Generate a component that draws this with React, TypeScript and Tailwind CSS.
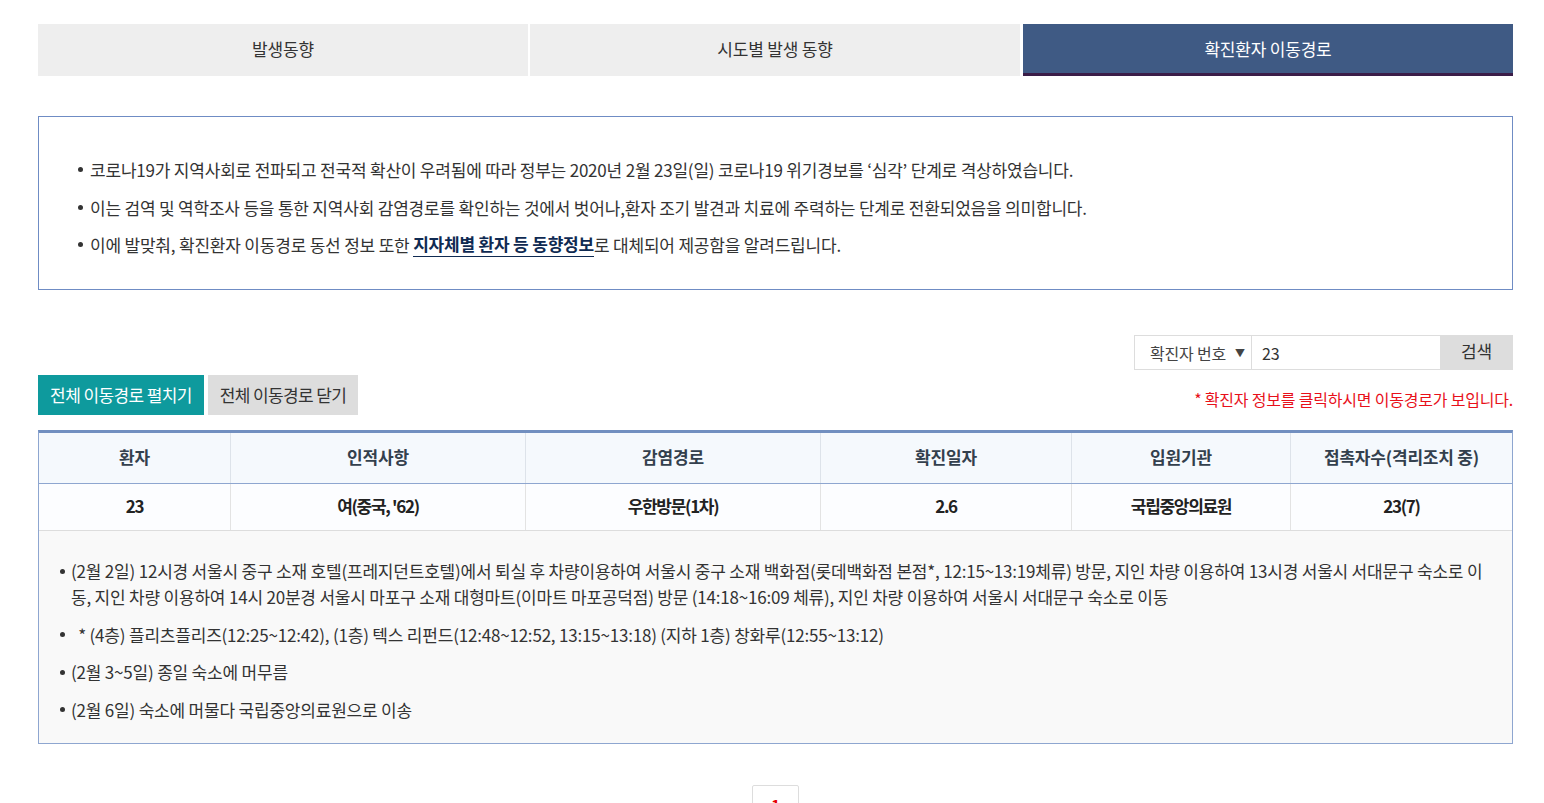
import React from "react";

const font = { fontFamily: '"Noto Sans CJK KR", "Noto Sans", sans-serif' };

function Dot() {
  return <span className="w-[5px] h-[5px] rounded-full bg-[#333]" />;
}

function Bullet({ children }: { children: React.ReactNode }) {
  return (
    <li className="flex">
      <span className="w-[11px] shrink-0 h-[26px] flex items-center">
        <Dot />
      </span>
      <span className="flex-1">{children}</span>
    </li>
  );
}

function NoticeItem({ children }: { children: React.ReactNode }) {
  return (
    <li className="flex items-center">
      <span className="w-[12px] shrink-0 flex items-center">
        <Dot />
      </span>
      {children}
    </li>
  );
}

export default function App() {
  const cols = [
    { w: "w-[192px]", h: "환자", v: "23" },
    { w: "w-[295px]", h: "인적사항", v: "여(중국, '62)" },
    { w: "w-[295px]", h: "감염경로", v: "우한방문(1차)" },
    { w: "w-[251px]", h: "확진일자", v: "2.6" },
    { w: "w-[219px]", h: "입원기관", v: "국립중앙의료원" },
    { w: "flex-1", h: "접촉자수(격리조치 중)", v: "23(7)" },
  ];
  return (
    <div className="bg-white min-h-[803px] text-[#333] tracking-[-0.2px]" style={font}>
      <div className="ml-[38px] w-[1475px] pt-[24px]">
        {/* tabs */}
        <div className="flex gap-[2px] h-[52px]">
          <div className="w-[490px] bg-[#eeeeee] flex items-center justify-center text-[17px] text-[#333] pb-[2px]">발생동향</div>
          <div className="w-[490px] bg-[#eeeeee] flex items-center justify-center text-[17px] text-[#333] pb-[2px]">시도별 발생 동향</div>
          <div className="flex-1 ml-[1px] bg-[#3f5a84] border-b-[3px] border-[#3b1d48] flex items-center justify-center text-[17px] text-white">확진환자 이동경로</div>
        </div>

        {/* notice */}
        <div className="mt-[40px] h-[174px] border border-[#6f8cc4] pl-[39px] pt-[34px]">
          <ul className="text-[17px] leading-[37.5px] text-[#333]">
            <NoticeItem>코로나19가 지역사회로 전파되고 전국적 확산이 우려됨에 따라 정부는 2020년 2월 23일(일) 코로나19 위기경보를 ‘심각’ 단계로 격상하였습니다.</NoticeItem>
            <NoticeItem>이는 검역 및 역학조사 등을 통한 지역사회 감염경로를 확인하는 것에서 벗어나,환자 조기 발견과 치료에 주력하는 단계로 전환되었음을 의미합니다.</NoticeItem>
            <NoticeItem>
              이에 발맞춰, 확진환자 이동경로 동선 정보 또한&nbsp;
              <a className="font-bold text-[#0f2a52] border-b border-[#0f2a52] leading-[24px]">지자체별 환자 등 동향정보</a>
              로 대체되어 제공함을 알려드립니다.
            </NoticeItem>
          </ul>
        </div>

        {/* search */}
        <div className="mt-[45px] flex justify-end">
          <div className="flex h-[35px] text-[16px]">
            <div className="w-[118px] border border-[#dddddd] flex items-center pl-[15px] text-[#444]">
              확진자 번호<span className="ml-[9px] text-[10px]">▼</span>
            </div>
            <div className="w-[188px] border-y border-[#dddddd] flex items-center pl-[10px] text-[#333]">23</div>
            <div className="w-[73px] bg-[#dddddd] flex items-center justify-center text-[#333] text-[17px] pb-[3px]">검색</div>
          </div>
        </div>

        <div className="mt-[5px] flex items-end justify-between">
          <div className="flex gap-[4px]">
            <div className="w-[166px] h-[40px] bg-[#0e9a9d] text-white flex items-center justify-center text-[17px] tracking-[-0.6px]">전체 이동경로 펼치기</div>
            <div className="w-[150px] h-[40px] bg-[#dddddd] text-[#333] flex items-center justify-center text-[17px] tracking-[-0.6px]">전체 이동경로 닫기</div>
          </div>
          <div className="text-[16px] text-[#e8101a] pb-[4px]">* 확진자 정보를 클릭하시면 이동경로가 보입니다.</div>
        </div>

        {/* table */}
        <div className="mt-[15px] border-t-[3px] border-[#718fc0] border-x border-b border-x-[#8ea6d0] border-b-[#8ea6d0]">
          <div className="flex h-[51px] bg-[#f5f9fd] border-b border-[#8ea6d0]">
            {cols.map((c, i) => (
              <div
                key={i}
                className={`${c.w} flex items-center justify-center text-[17px] font-bold text-[#33404d] pb-[2px] ${i < 5 ? "border-r border-[#dde3ea]" : ""}`}
              >
                {c.h}
              </div>
            ))}
          </div>
          <div className="flex h-[47px] bg-[#fcfdff] border-b border-[#dddddd]">
            {cols.map((c, i) => (
              <div
                key={i}
                className={`${c.w} flex items-center justify-center text-[17px] font-bold text-[#222] tracking-[-1.3px] pb-[2px] ${i < 5 ? "border-r border-[#e3e3e3]" : ""}`}
              >
                {c.v}
              </div>
            ))}
          </div>
          <div className="bg-[#f9f9f9] pl-[21px] pr-[16px] pt-[27px] pb-[20px]">
            <ul className="text-[17px] leading-[26px] text-[#333] flex flex-col gap-[11.5px]">
              <Bullet>(2월 2일) 12시경 서울시 중구 소재 호텔(프레지던트호텔)에서 퇴실 후 차량이용하여 서울시 중구 소재 백화점(롯데백화점 본점*, 12:15~13:19체류) 방문, 지인 차량 이용하여 13시경 서울시 서대문구 숙소로 이동, 지인 차량 이용하여 14시 20분경 서울시 마포구 소재 대형마트(이마트 마포공덕점) 방문 (14:18~16:09 체류), 지인 차량 이용하여 서울시 서대문구 숙소로 이동</Bullet>
              <Bullet>&nbsp; * (4층) 플리츠플리즈(12:25~12:42), (1층) 텍스 리펀드(12:48~12:52, 13:15~13:18) (지하 1층) 창화루(12:55~13:12)</Bullet>
              <Bullet>(2월 3~5일) 종일 숙소에 머무름</Bullet>
              <Bullet>(2월 6일) 숙소에 머물다 국립중앙의료원으로 이송</Bullet>
            </ul>
          </div>
        </div>

        {/* pagination */}
        <div className="mt-[41px] flex justify-center">
          <div className="w-[47px] h-[40px] border border-[#dddddd] rounded-[2px] flex items-start justify-center pt-[8px] text-[#e60000] font-bold text-[15px]">1</div>
        </div>
      </div>
    </div>
  );
}
